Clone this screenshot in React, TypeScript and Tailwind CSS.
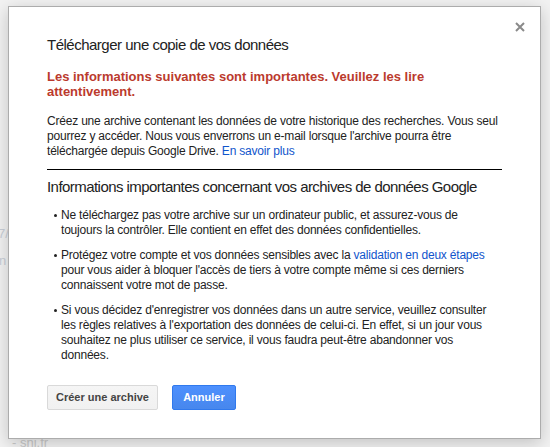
export default function App() {
  return (
    <div className="relative h-[447px] w-[550px] overflow-hidden bg-[#f2f2f2] font-['Liberation_Sans',Arial,sans-serif] text-[#222]">
      {/* page behind the overlay */}
      <span className="absolute left-[-2px] top-[224px] text-[13px] text-[#c9ced6]">7/</span>
      <span className="absolute left-[-1px] top-[251px] text-[13px] text-[#c9ced6]">n</span>
      <span className="absolute left-[12px] top-[433px] text-[13px] text-[#c9c9c9]">- snj.fr</span>

      <div className="relative z-10 ml-[8px] mt-[6px] w-[533px] border border-[#acacac] bg-white px-[38px] pb-[28px] pt-[29px] shadow-[0_4px_16px_rgba(0,0,0,0.2)]">
        <button className="absolute right-[10px] top-[10px] flex h-[20px] w-[20px] items-center justify-center">
          <svg width="10" height="10" viewBox="0 0 10 10">
            <path d="M1 1L9 9M9 1L1 9" stroke="#8a8a8a" strokeWidth="2" />
          </svg>
        </button>

        <h1 className="text-[15px] leading-[18px] font-normal tracking-[-0.5px]">Télécharger une copie de vos données</h1>

        <p className="mt-[15px] text-[13px] font-bold leading-[15px] text-[#bb3a2d]">
          Les informations suivantes sont importantes. Veuillez les lire attentivement.
        </p>

        <p className="mt-[15px] text-[12px] leading-[15px] tracking-[-0.2px]">
          Créez une archive contenant les données de votre historique des recherches. Vous seul pourrez y accéder. Nous vous enverrons un e-mail lorsque l'archive pourra être téléchargée depuis Google Drive.{' '}
          <a className="text-[#15c]">En savoir plus</a>
        </p>

        <div className="mt-[10px] h-px bg-black" />

        <h2 className="mt-[8px] text-[15px] leading-[18px] font-normal tracking-[-0.55px]">
          Informations importantes concernant vos archives de données Google
        </h2>

        <ul className="mt-[12px] flex flex-col gap-[10px] pr-[8px] text-[12px] leading-[15px] tracking-[-0.2px]">
          <li className="flex">
            <span className="mt-[6px] ml-[7px] mr-[4px] h-[3px] w-[3px] shrink-0 rounded-full bg-[#222]" />
            <span>
              Ne téléchargez pas votre archive sur un ordinateur public, et assurez-vous de toujours la contrôler. Elle contient en effet des données confidentielles.
            </span>
          </li>
          <li className="flex">
            <span className="mt-[6px] ml-[7px] mr-[4px] h-[3px] w-[3px] shrink-0 rounded-full bg-[#222]" />
            <span>
              Protégez votre compte et vos données sensibles avec la{' '}
              <a className="text-[#15c]">validation en deux étapes</a> pour vous aider à bloquer l'accès de tiers à votre compte même si ces derniers connaissent votre mot de passe.
            </span>
          </li>
          <li className="flex">
            <span className="mt-[6px] ml-[7px] mr-[4px] h-[3px] w-[3px] shrink-0 rounded-full bg-[#222]" />
            <span>
              Si vous décidez d'enregistrer vos données dans un autre service, veuillez consulter les règles relatives à l'exportation des données de celui-ci. En effet, si un jour vous souhaitez ne plus utiliser ce service, il vous faudra peut-être abandonner vos données.
            </span>
          </li>
        </ul>

        <div className="mt-[22px] flex gap-[14px]">
          <button className="h-[25px] rounded-[2px] border border-[#d9d9d9] bg-gradient-to-b from-[#f5f5f5] to-[#f1f1f1] px-[8px] text-[11px] font-bold text-[#444]">
            Créer une archive
          </button>
          <button className="h-[25px] min-w-[64px] rounded-[2px] border border-[#3079ed] bg-gradient-to-b from-[#4d90fe] to-[#4787ed] px-[8px] text-[11px] font-bold text-white">
            Annuler
          </button>
        </div>
      </div>
    </div>
  );
}
